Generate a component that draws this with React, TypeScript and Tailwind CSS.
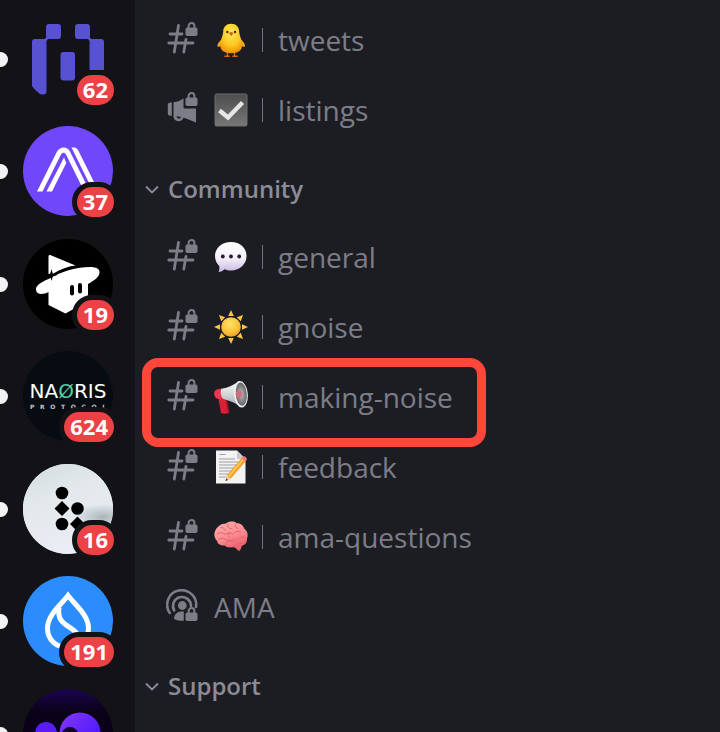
import React from 'react';

interface Server {
  name: string;
  unread: number;
  bg: string;
  art: React.ReactNode;
}

interface Channel {
  name: string;
  icon: 'text' | 'news' | 'stage';
  emoji?: React.ReactNode;
  marked?: boolean;
}

interface Category {
  name: string;
  channels: Channel[];
}

/* ---------- channel icons ---------- */

const Padlock: React.FC<{ y?: number }> = ({ y = 0 }) => (
  <g transform={`translate(0 ${y})`}>
    <rect x="19.5" y="5.5" width="12" height="8.5" rx="1.8" fill="currentColor" />
    <path d="M22.6 6.5V4a2.9 2.9 0 0 1 5.8 0v2.5" fill="none" stroke="currentColor" strokeWidth="2" />
  </g>
);

const HashIcon = () => (
  <svg viewBox="0 0 32 32" className="size-8" aria-hidden="true">
    <g stroke="currentColor" strokeWidth="2.8" strokeLinecap="round" fill="none">
      <path d="M4 12H16M2.8 21H27M12.5 3.5 8.3 30M20 17.3 17.8 30" />
    </g>
    <Padlock />
  </svg>
);

const NewsIcon = () => (
  <svg viewBox="0 0 32 32" className="size-8" aria-hidden="true">
    <path d="M5.8 10.5v13.2H4.4A2.6 2.6 0 0 1 1.8 21.1v-8a2.6 2.6 0 0 1 2.6-2.6z" fill="currentColor" />
    <path
      d="M7.5 10.2C12 9.800 14.500 8.500 17.500 6.500V15c0 1 .6 1.500 1.500 1.500H30V30.500C25.500 29 22 27 17.500 25.800A5.200 5.200 0 0 1 7.500 25z"
      fill="currentColor"
    />
    <path d="M10.5 24.300 15 25a2.300 2.300 0 0 1-4.500-.7z" fill="#1c1d23" />
    <Padlock />
  </svg>
);

const StageIcon = () => (
  <svg viewBox="0 0 32 32" className="size-8" aria-hidden="true">
    <g fill="none" stroke="currentColor" strokeWidth="2.6" strokeLinecap="round">
      <path d="M3.8 24A14.500 14.500 0 1 1 30 18" />
      <path d="M8.200 21.500A9 9 0 1 1 25 17" />
    </g>
    <circle cx="16.300" cy="16.500" r="4.400" fill="currentColor" />
    <path d="M8 30c0-5 3.500-7.500 8-7.500h1.800v9.300c-4.500 0-7.500-.5-9.800-1.800z" fill="currentColor" />
    <Padlock y={18} />
  </svg>
);

const Chevron = () => (
  <svg viewBox="0 0 16 16" className="size-4" aria-hidden="true">
    <path d="m2 5.5 6 6 6-6" fill="none" stroke="currentColor" strokeWidth="1.8" />
  </svg>
);

/* ---------- emoji ---------- */

const Chick = () => (
  <svg viewBox="0 0 34 34" className="size-[34px]" aria-hidden="true">
    <defs>
      <radialGradient id="chick" cx=".5" cy=".3" r=".7">
        <stop offset="0" stopColor="#ffe75e" />
        <stop offset=".6" stopColor="#fdc921" />
        <stop offset="1" stopColor="#f09308" />
      </radialGradient>
    </defs>
    <path d="M13.500 29v4M20.500 29v4M11 33.300h4M19 33.300h4" stroke="#d9680e" strokeWidth="1.500" strokeLinecap="round" />
    <path d="M10 15c-4 2-7 6-6.500 8.500 1.500 1 4-.5 6-2zM24.500 15c4 2 7 6 6.500 8.500-1.500 1-4-.5-6-2z" fill="#f3a916" />
    <path d="M17.200.8c5 0 8 3.300 8 8 0 4 3 8 3 13 0 5.700-4 8.500-11 8.500s-11-2.800-11-8.500c0-5 3-9 3-13 0-4.700 3-8 8-8z" fill="url(#chick)" />
    <circle cx="13.300" cy="9" r="1.200" fill="#4a2b0b" />
    <circle cx="21" cy="9" r="1.200" fill="#4a2b0b" />
    <path d="m14.800 10 2.400-1 2.400 1-2.400 3z" fill="#c9640a" />
  </svg>
);

const CheckBox = () => (
  <svg viewBox="0 0 34 34" className="size-[34px]" aria-hidden="true">
    <defs>
      <linearGradient id="box" x1="0" y1="0" x2="0" y2="1">
        <stop offset="0" stopColor="#4d4d4d" />
        <stop offset="1" stopColor="#777" />
      </linearGradient>
    </defs>
    <rect x="1" y="1" width="32" height="32" rx="1.5" fill="url(#box)" stroke="#6e6e6e" />
    <path d="m5.500 17.500 8.500 7L28.500 9.500" fill="none" stroke="#e6e6e6" strokeWidth="4.300" />
  </svg>
);

const Speech = () => (
  <svg viewBox="0 0 34 34" className="size-[34px]" aria-hidden="true">
    <defs>
      <linearGradient id="speech" x1="0" y1="0" x2="0" y2="1">
        <stop offset="0" stopColor="#fff" />
        <stop offset=".55" stopColor="#f4f0fa" />
        <stop offset="1" stopColor="#c9b8e2" />
      </linearGradient>
    </defs>
    <path d="M17 2C26 2 32.500 8 32.500 16S26 30.500 17 30.500c-2.500 0-4.500-.4-6.300-1.200-2 1.700-3.700 2.500-6.200 2.700 1-1.700 1-3.700.7-6C2.500 23 1 20 1 16 1 8 8 2 17 2z" fill="url(#speech)" />
    <g fill="#251c2c">
      <circle cx="8.800" cy="16.500" r="1.900" />
      <circle cx="17" cy="16.500" r="1.900" />
      <circle cx="25.200" cy="16.500" r="1.900" />
    </g>
  </svg>
);

const Sun = () => (
  <svg viewBox="0 0 34 34" className="size-[34px]" aria-hidden="true">
    <defs>
      <radialGradient id="sun" cx=".45" cy=".35" r=".7">
        <stop offset="0" stopColor="#ffe26a" />
        <stop offset=".6" stopColor="#fbc23a" />
        <stop offset="1" stopColor="#ee9a1c" />
      </radialGradient>
    </defs>
    <g fill="#fac73a">
      {[0, 45, 90, 135, 180, 225, 270, 315].map((deg) => (
        <path key={deg} d="m17 0 2.800 6h-5.600z" transform={`rotate(${deg} 17 17)`} />
      ))}
    </g>
    <circle cx="17" cy="17" r="9.800" fill="url(#sun)" />
  </svg>
);

const Megaphone = () => (
  <svg viewBox="0 0 34 34" className="size-[34px]" aria-hidden="true">
    <defs>
      <linearGradient id="horn" x1="0" y1="0" x2="0" y2="1">
        <stop offset="0" stopColor="#fff" />
        <stop offset="1" stopColor="#a5a8ab" />
      </linearGradient>
      <radialGradient id="bell">
        <stop offset="0" stopColor="#bbb" />
        <stop offset="1" stopColor="#63666b" />
      </radialGradient>
    </defs>
    <path d="m4 17 7.500-1.500L15 33c-2.500 1-6 1-8 0z" fill="#d81f35" />
    <path d="M11 17h1.500l3 14.500L14 33z" fill="#9c1426" />
    <path d="m8 8.500-4.500.8C.8 10 0 12 .2 14.300c.2 2.700 1.800 4.500 4.300 4.700l5-.7z" fill="#ee3550" />
    <path d="M7.500 8.700C14 8 20 5 25 1l3.500 26.500C22 23.500 16 20.500 9.500 19 6.500 16 6 12 7.500 8.700z" fill="url(#horn)" />
    <ellipse cx="26.800" cy="14.200" rx="7" ry="13.300" transform="rotate(-5 26.800 14.200)" fill="#eceded" />
    <ellipse cx="27.300" cy="14.200" rx="5.500" ry="11.700" transform="rotate(-5 27.300 14.200)" fill="url(#bell)" />
    <ellipse cx="24.800" cy="14.200" rx="3" ry="3.600" fill="#d66b78" />
  </svg>
);

const Memo = () => (
  <svg viewBox="0 0 34 34" className="size-[34px]" aria-hidden="true">
    <path d="M2 .5h21L31.500 9v24.500H2z" fill="#f3f3f3" />
    <path d="M23 .5v8.500h8.500z" fill="#c9cbcd" />
    <path d="M5.500 4.500h6M5 9h16M5 12h20M5 15h18M5 18h15M5 21h13M5 24h9M5 27h7" stroke="#9a9ea3" strokeWidth="1" />
    <path d="m11.500 31 1.500-6L27.500 8l4 3.500L17 28.500z" fill="#f5a32c" />
    <path d="m15 26 14-16.500" stroke="#ffc862" strokeWidth="1.500" />
    <path d="M27.500 8 29 6.500c1.500-1 4.500 1.500 3.800 3.300l-1.300 1.700z" fill="#ee7686" />
    <path d="m11.500 31 1.500-6 4 3.500z" fill="#efc79a" />
    <path d="m11.500 31 .7-2.500 1.700 1.500z" fill="#3a2d26" />
  </svg>
);

const Brain = () => (
  <svg viewBox="0 0 34 34" className="size-[34px]" aria-hidden="true">
    <defs>
      <linearGradient id="brain" x1="0" y1="0" x2=".5" y2="1">
        <stop offset="0" stopColor="#ffb0ae" />
        <stop offset=".6" stopColor="#fb8c90" />
        <stop offset="1" stopColor="#ee5f6c" />
      </linearGradient>
    </defs>
    <path
      d="M12 3.5c3-2.500 8-2.500 10.500-.5 4 .3 7 2.500 7.700 5.500 3.300 2.500 4.300 6.500 2.800 10 .3 4-2 6.500-5.300 7.500-.5 2.500-1.200 4-2.700 5-1.700-1-3-2.700-5-4-3.500 1-7.500.5-9.500-1.500-4 .3-7-1.500-7.300-4.500C.3 18.500-.3 14.500 1 11.500 2.500 7 7 3.500 12 3.500z"
      fill="url(#brain)"
    />
    <path
      d="M7 7.500c2 0 3.500 1 4.500 3M14 4c-1 3 1 5 4 4.500M22 3.500c-1.500 2-.5 4 2 5M3 14c3-2.500 6-1.500 8 .5 3-2 6-2 8 0 1.500-3 5-4 8-2.500M4 20c3-2.500 5.500-2 8-.5 3 1.500 6 1 8.500-1M11.500 25c0-2.500 1.500-4 4.500-4 4 .5 7 0 9-3M27 17c2-.5 3.500 0 4.500 1.500M20 27c1-2.500 4-4 8-4M16 12c-1.500 1-2 3-1 5"
      fill="none"
      stroke="#e0656f"
      strokeWidth="1"
      strokeLinecap="round"
    />
  </svg>
);

/* ---------- server logos ---------- */

const BracketLogo = () => (
  <svg viewBox="0 0 90 90" className="size-full" aria-hidden="true">
    <g fill="#5652d1">
      <rect x="23" y="10" width="15" height="15" rx="3" />
      <rect x="52" y="10" width="15" height="15" rx="3" />
      <path d="M12 25h8c3 0 3.500-2 3.500-3l2 2.500-2 2.500v50c0 2-1 3.500-3 3.500h-2c-2 0-9.500-5-9.500-8V28c0-2 1-3 3-3z" />
      <path d="M78 25h-8c-3 0-3.500-2-3.500-3l-2 2.500 2 2.500v29H81V28c0-2-1-3-3-3z" />
      <rect x="37.500" y="38" width="14.500" height="28.500" rx="3" />
    </g>
  </svg>
);

const PeakLogo = () => (
  <svg viewBox="0 0 90 90" className="size-full" aria-hidden="true">
    <g fill="#fff">
      <path d="M14 65.500 34 25.500c3.500-5.500 10-5.500 13 0L68 68h-5.500L43 28.500c-1.500-2.500-3.500-2.500-5 0L19.500 65.500z" />
      <path d="M23.500 65.500 41 31.500l2.300 5.500-14.300 28.500z" />
      <path d="M48.500 21.500h2.500c2 0 3 1 4 2.500L76 66h-5.500z" />
    </g>
  </svg>
);

const WizardLogo = () => (
  <svg viewBox="0 0 90 90" className="size-full" aria-hidden="true">
    <g fill="#fff">
      <path d="M25.500 35V17.500c0-1.500 1-2 2.300-1.300L52.500 26.500c-8 1-16 4-22 8z" />
      <path d="M25.500 40C39 32 54 28 67 28c6.500 0 10 2 9.500 6-.5 4-5 7.500-11.500 11v17L42.500 74.500l-17-8.500V53c-7 3.500-12 2-12.500-2-.5-4 4-7.500 12.500-11z" />
    </g>
    <path d="M30 36.500C37 32 46 28.500 54 27.500" stroke="#000" strokeWidth="1.800" fill="none" />
    <path d="m28.500 30 1.300 4.700 4.700 1.300-4.700 1.300-1.300 4.700-1.300-4.700-4.700-1.300 4.700-1.300z" fill="#000" />
    <rect x="47" y="46" width="4" height="10.500" rx="2" fill="#000" />
    <rect x="55" y="44" width="4" height="10.500" rx="2" fill="#000" />
  </svg>
);

const NaorisLogo = () => (
  <span className="flex size-full flex-col items-center pt-[29px] font-['DejaVu_Sans',sans-serif] text-white">
    <span className="text-xl leading-[23px]">
      NA<span className="text-[#4fd1a5]">Ø</span>RIS
    </span>
    <span className="flex w-[76px] justify-between text-[6px] leading-[7px] font-bold text-[#c8cacc]">
      {'PROTOCOL'.split('').map((letter, i) => (
        <span key={i}>{letter}</span>
      ))}
    </span>
  </span>
);

const DotsLogo = () => (
  <svg viewBox="0 0 90 90" className="size-full" aria-hidden="true">
    <defs>
      <linearGradient id="mist" x1="0" y1="0" x2=".4" y2="1">
        <stop offset="0" stopColor="#d2dbde" />
        <stop offset=".4" stopColor="#e2e8ea" />
        <stop offset="1" stopColor="#e9edf5" />
      </linearGradient>
      <radialGradient id="cloud">
        <stop offset="0" stopColor="#aab6bb" />
        <stop offset="1" stopColor="#aab6bb" stopOpacity="0" />
      </radialGradient>
    </defs>
    <rect width="90" height="90" fill="url(#mist)" />
    <ellipse cx="80" cy="53" rx="30" ry="13" fill="url(#cloud)" />
    <g fill="#000">
      <circle cx="39" cy="29" r="6.300" />
      <circle cx="54.500" cy="44.500" r="6.300" />
      <circle cx="39" cy="60" r="6.300" />
      <path d="m39 37 7.500 7.500-7.500 7.500-7.500-7.500zM54.500 52.500 62 60l-7.500 7.500L47 60z" />
    </g>
  </svg>
);

const DropLogo = () => (
  <svg viewBox="0 0 90 90" className="size-full" aria-hidden="true">
    <g fill="none" stroke="#fff" strokeWidth="5">
      <path d="M45 19.500C37 30 24.500 39 24.500 52.500 24.500 64 33.500 71.500 45 71.500S65.500 64 65.500 52.500C65.500 39 53 30 45 19.500z" />
      <path d="M36 31.500c-2 14 6 16.500 13 21.500 6 4 8 8 6 16" />
    </g>
  </svg>
);

const OrbLogo = () => (
  <svg viewBox="0 0 90 90" className="size-full" aria-hidden="true">
    <defs>
      <linearGradient id="night" x1="0" y1="0" x2="0" y2="1">
        <stop offset="0" stopColor="#1c0550" />
        <stop offset=".25" stopColor="#090218" />
        <stop offset="1" stopColor="#090218" />
      </linearGradient>
      <linearGradient id="orb" x1="0" y1="0" x2="1" y2="1">
        <stop offset="0" stopColor="#8437f5" />
        <stop offset="1" stopColor="#3e10ff" />
      </linearGradient>
    </defs>
    <rect width="90" height="90" fill="url(#night)" />
    <circle cx="23" cy="44" r="11" fill="#5a1cf5" />
    <circle cx="57" cy="44" r="20.500" fill="url(#orb)" />
    <circle cx="47" cy="46.500" r="8.500" fill="#120330" />
  </svg>
);

const servers: Server[] = [
  { name: 'Bracket', unread: 62, bg: 'bg-transparent', art: <BracketLogo /> },
  { name: 'Peak', unread: 37, bg: 'bg-[#7047fb]', art: <PeakLogo /> },
  { name: 'Wizard', unread: 19, bg: 'bg-black', art: <WizardLogo /> },
  { name: 'Naoris', unread: 624, bg: 'bg-[#070c12]', art: <NaorisLogo /> },
  { name: 'Dots', unread: 16, bg: 'bg-[#e2e8ea]', art: <DotsLogo /> },
  { name: 'Drop', unread: 191, bg: 'bg-[#2b8dfd]', art: <DropLogo /> },
  { name: 'Orb', unread: 0, bg: 'bg-[#090218]', art: <OrbLogo /> },
];

const categories: Category[] = [
  {
    name: '',
    channels: [
      { name: 'tweets', icon: 'text', emoji: <Chick /> },
      { name: 'listings', icon: 'news', emoji: <CheckBox /> },
    ],
  },
  {
    name: 'Community',
    channels: [
      { name: 'general', icon: 'text', emoji: <Speech /> },
      { name: 'gnoise', icon: 'text', emoji: <Sun /> },
      { name: 'making-noise', icon: 'text', emoji: <Megaphone />, marked: true },
      { name: 'feedback', icon: 'text', emoji: <Memo /> },
      { name: 'ama-questions', icon: 'text', emoji: <Brain /> },
      { name: 'AMA', icon: 'stage' },
    ],
  },
  { name: 'Support', channels: [] },
];

const icons = {
  text: <HashIcon />,
  news: <NewsIcon />,
  stage: <StageIcon />,
};

const ServerItem: React.FC<{ server: Server }> = ({ server }) => (
  <li className="flex items-center gap-[15px] odd:mb-[22px] even:mb-[23px]">
    <span className="h-[15px] w-2 rounded-r-full bg-[#f2f2f4]" />
    <button type="button" aria-label={server.name} className="relative size-[90px]">
      <span className={`block size-full overflow-hidden rounded-full ${server.bg}`}>{server.art}</span>
      {server.unread > 0 && (
        <span className="absolute -right-1.5 -bottom-1.5 rounded-full border-[5px] border-[#131317] bg-[#ec4145] px-1.5 pb-0.5 text-[22px] leading-7 font-bold text-white">
          {server.unread}
        </span>
      )}
    </button>
  </li>
);

const ChannelItem: React.FC<{ channel: Channel }> = ({ channel }) => (
  <li className="relative">
    <button type="button" className="flex h-[70px] w-full items-center pl-[31px] text-left text-[#7c7d87]">
      <span className="-mt-1 mr-4">{icons[channel.icon]}</span>
      {channel.emoji && (
        <>
          {channel.emoji}
          <span className="mr-[15px] ml-3.5 h-6 w-px bg-[#74757e]" />
        </>
      )}
      <span className="text-[28px] leading-9">{channel.name}</span>
    </button>
    {channel.marked && (
      <span className="pointer-events-none absolute -top-1 left-[7px] h-[89px] w-[344px] rounded-2xl border-[9px] border-[#ff463a]" />
    )}
  </li>
);

const App: React.FC = () => {
  return (
    <div className="flex h-screen overflow-hidden bg-[#1c1d23] font-['Open_Sans','Noto_Sans',sans-serif]">
      <nav aria-label="Servers" className="w-[135px] shrink-0 bg-[#131317]">
        <ul className="pt-3.5">
          {servers.map((server) => (
            <ServerItem key={server.name} server={server} />
          ))}
        </ul>
      </nav>

      <main className="min-w-0 flex-1 pt-[5px]">
        {categories.map((category) => (
          <section key={category.name}>
            {category.name && (
              <button
                type="button"
                className="flex h-[77px] w-full items-center gap-2 pt-[11px] pl-[9px] text-left text-[#8b8c96]"
              >
                <Chevron />
                <h2 className="text-2xl font-semibold">{category.name}</h2>
              </button>
            )}
            <ul>
              {category.channels.map((channel) => (
                <ChannelItem key={channel.name} channel={channel} />
              ))}
            </ul>
          </section>
        ))}
      </main>
    </div>
  );
};

export default App;
